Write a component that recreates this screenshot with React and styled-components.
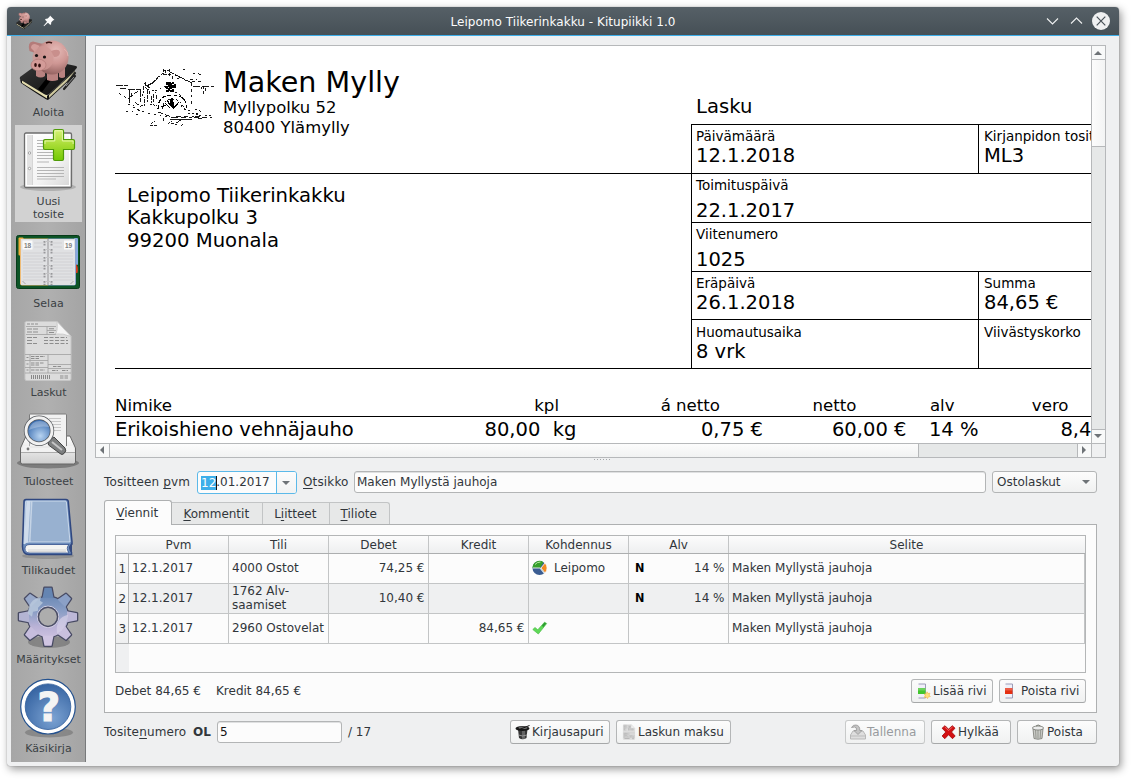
import React from "react";
import styled, { createGlobalStyle, css } from "styled-components";

const Global = createGlobalStyle`
  html, body { margin: 0; padding: 0; background: #fff; }
  body { font-family: "DejaVu Sans", sans-serif; font-size: 12px; color: #31363b; overflow: hidden; }
  *, *::before, *::after { box-sizing: border-box; }
  svg { display: block; flex: none; }
`;

const Desktop = styled.div`
  width: 1132px;
  height: 779px;
  padding: 7px 13px 12px 7px;
  background: #fff;
`;

const Window = styled.div`
  width: 1112px;
  height: 759px;
  display: flex;
  flex-direction: column;
  background: #eff0f1;
  border-radius: 4px 4px 3px 3px;
  box-shadow: 0 0 1px rgba(0, 0, 0, 0.5), 2px 3px 8px rgba(0, 0, 0, 0.42);
`;

const TitleBar = styled.header`
  height: 29px;
  flex: none;
  display: grid;
  grid-template-columns: 100px 1fr 100px;
  align-items: center;
  background: linear-gradient(#566067, #465056);
  border-bottom: 1px solid #3daee9;
  border-radius: 4px 4px 0 0;
  color: #fcfcfc;
`;

const TitleIcons = styled.div`
  display: flex;
  align-items: center;
  gap: 10px;
  padding-left: 8px;
`;

const Title = styled.div`
  text-align: center;
  line-height: 26px;
  padding-top: 2px;
  letter-spacing: 0.04px;
`;

const WindowControls = styled.div`
  display: flex;
  justify-content: flex-end;
  align-items: center;
  gap: 8px;
  padding-right: 9px;
`;

const Body = styled.div`
  flex: 1;
  min-height: 0;
  display: flex;
  padding: 0 0 4px 4px;
`;

const Sidebar = styled.nav`
  width: 75px;
  flex: none;
  display: flex;
  flex-direction: column;
  align-items: center;
  gap: 4px;
  background: linear-gradient(90deg, #a6a6a6, #b0b0b0 50%, #a4a4a4);
  border-right: 1px solid #77797b;
`;

const SideItem = styled.div`
  width: 67px;
  padding-top: 3px;
  height: ${(p) => (p.$tall ? 97 : 85)}px;
  margin-bottom: ${(p) => (p.$tall ? 1 : 0)}px;
  display: flex;
  flex-direction: column;
  align-items: center;
  background: ${(p) => (p.$active ? "#d2d2d2" : "transparent")};
`;

const SideLabel = styled.div`
  margin-top: 2px;
  padding: 1px 0 0 1px;
  font-size: 11px;
  line-height: 13px;
  text-align: center;
  white-space: pre;
  color: #3a3f44;
`;

const Main = styled.main`
  flex: 1;
  min-width: 0;
  padding: 9px 0 0 9px;
`;

/* ---------- document viewer ---------- */

const Viewer = styled.section`
  width: 1011px;
  height: 413px;
  display: grid;
  grid-template-columns: 995px 14px;
  grid-template-rows: 397px 14px;
  border: 1px solid #b6b8ba;
`;

const Page = styled.div`
  background: #fff;
  color: #000;
  overflow: hidden;
  padding-left: 19px;
  white-space: pre;
`;

const PageTop = styled.div`
  display: flex;
  height: 323px;
`;

const PageLeft = styled.div`
  width: 576px;
  flex: none;
`;

const LetterHead = styled.div`
  height: 128px;
  border-bottom: 1px solid #000;
  display: flex;
  gap: 9px;
  padding-top: 20px;
`;

const Sender = styled.div`
  font-size: 16.45px;
  line-height: 20px;
`;

const SenderName = styled.div`
  font-size: 28.6px;
  line-height: 32px;
  margin-bottom: 0;
`;

const Recipient = styled.div`
  height: 195px;
  border-bottom: 1px solid #000;
  padding: 11px 0 0 12px;
  font-size: 19.65px;
  line-height: 22.4px;
`;

const PageRight = styled.div`
  width: 420px;
  flex: none;
`;

const DocType = styled.div`
  height: 78px;
  padding: 49px 0 0 5px;
  font-size: 19.6px;
  line-height: 24px;
`;

const InfoGrid = styled.div`
  border-left: 1px solid #000;
  border-bottom: 1px solid #000;
`;

const InfoRow = styled.div`
  display: flex;
  height: ${(p) => p.$h || 49}px;
  border-top: 1px solid #000;
`;

const InfoCell = styled.div`
  width: ${(p) => (p.$wide ? "400px" : "286px")};
  flex: none;
  padding: ${(p) => (p.$low ? 2 : 1)}px 0 0 4px;
  & + & { border-left: 1px solid #000; width: 140px; padding-left: 5px; }
`;

const InfoLabel = styled.div`
  font-size: 13.5px;
  line-height: 20px;
`;

const InfoValue = styled.div`
  font-size: 19.5px;
  line-height: 22px;
  margin-top: ${(p) => (p.$spaced ? 5 : -1)}px;
`;

const ItemHead = styled.div`
  display: flex;
  margin-top: 24px;
  height: 24px;
  border-bottom: 1px solid #000;
  font-size: 16.6px;
  line-height: 25px;
`;

const ItemRow = styled.div`
  display: flex;
  font-size: 19.55px;
  line-height: 25px;
`;

const ItemCell = styled.div`
  width: ${(p) => p.$w}px;
  flex: none;
  text-align: ${(p) => (p.$left ? "left" : "right")};
`;

const VScroll = styled.div`
  display: flex;
  flex-direction: column;
  border-left: 1px solid #b6b8ba;
  background: #e6e8e8;
`;

const HScroll = styled.div`
  display: flex;
  border-top: 1px solid #b6b8ba;
  background: #e6e8e8;
`;

const ScrollCorner = styled.div`
  border-left: 1px solid #b6b8ba;
  border-top: 1px solid #b6b8ba;
`;

const edge = "1px solid #b6b8ba";

const ScrollButton = styled.div`
  width: ${(p) => p.$w}px;
  height: ${(p) => p.$h}px;
  flex: none;
  display: flex;
  align-items: center;
  justify-content: center;
  padding: ${(p) => p.$nudge || 0};
  background: #f8f9f9;
  border-style: solid;
  border-color: #b6b8ba;
  border-width: ${(p) => p.$edges};
`;

const VThumb = styled.div`
  height: 87px;
  background: linear-gradient(90deg, #fcfcfc, #f3f4f4);
  border-bottom: ${edge};
`;

const HThumb = styled.div`
  width: 809px;
  background: linear-gradient(#fcfcfc, #f1f2f2);
  border-right: ${edge};
`;

const ScrollGap = styled.div`
  flex: 1;
`;

const Splitter = styled.div`
  width: 1011px;
  height: 13px;
  padding: 1px 0 0 2px;
  display: flex;
  justify-content: center;
  gap: 2px;
`;

const SplitDot = styled.i`
  width: 1px;
  height: 1px;
  background: #a4a7a9;
`;

/* ---------- form ---------- */

const Form = styled.div`
  width: 993px;
  margin-left: 9px;
`;

const FieldRow = styled.div`
  display: flex;
  height: 23px;
  line-height: 23px;
  white-space: pre;
`;

const FieldLabel = styled.label`
  width: ${(p) => p.$w}px;
  flex: none;
  padding-left: ${(p) => p.$pad || 0}px;
  letter-spacing: 0.14px;
`;

const Key = styled.span`
  text-decoration: underline;
  text-underline-offset: 2px;
  text-decoration-thickness: 1px;
  text-decoration-skip-ink: none;
`;

const inputLook = css`
  background: #fcfcfc;
  border: 1px solid #b3b5b6;
  border-radius: 3px;
`;

const DateField = styled.div`
  ${inputLook}
  border-color: #5bb9e9;
  width: 100px;
  height: 23px;
  display: flex;
  line-height: 21px;
  padding-left: 3px;
  overflow: hidden;
`;

const Selected = styled.span`
  background: #3daee9;
  color: #fcfcfc;
  height: 14px;
  line-height: 14px;
  margin-top: 4px;
  box-shadow: 1px 0 0 #111;
`;

const DateDrop = styled.div`
  width: 20px;
  margin-left: auto;
  padding-right: 2px;
  border-left: 1px solid #5bb9e9;
  background: linear-gradient(#fcfcfc, #f1f2f2);
  display: flex;
  align-items: center;
  justify-content: center;
`;

const TextField = styled.div`
  ${inputLook}
  width: ${(p) => p.$w}px;
  height: 22px;
  padding-left: 2px;
  line-height: 20px;
  box-shadow: inset 0 1px 0 #dfe0e1;
`;

const Combo = styled.div`
  ${inputLook}
  background: linear-gradient(#fcfcfc, #f0f1f1);
  width: 105px;
  height: 22px;
  margin-left: 6px;
  padding: 0 6px 0 4px;
  line-height: 20px;
  display: flex;
  align-items: center;
  justify-content: space-between;
`;

const TabBar = styled.div`
  display: flex;
  align-items: flex-end;
  height: 24px;
  margin-top: 6px;
`;

const Tab = styled.div`
  width: ${(p) => p.$w}px;
  height: ${(p) => (p.$active ? 25 : 22)}px;
  line-height: ${(p) => (p.$active ? 24 : 22)}px;
  margin-bottom: ${(p) => (p.$active ? -1 : 0)}px;
  padding-right: 1.5px;
  text-align: center;
  border: 1px solid ${(p) => (p.$active ? "#aeb0b1" : "#c2c4c5")};
  border-left-width: ${(p) => (p.$active ? 1 : 0)}px;
  border-bottom: 0;
  border-radius: ${(p) => (p.$active ? "3px 3px 0 0" : p.$last ? "0 3px 0 0" : "0")};
  background: ${(p) => (p.$active ? "#fcfcfc" : "#e7e8e8")};
  position: relative;
`;

const Panel = styled.div`
  height: 189px;
  border: 1px solid #aeb0b1;
  background: #fcfcfc;
  padding: 10px 10px 0;
`;

const Grid = styled.div`
  width: 971px;
  height: 138px;
  border: 1px solid #b4b6b7;
  display: flex;
  flex-direction: column;
`;

const GridHead = styled.div`
  height: 18px;
  flex: none;
  display: flex;
  padding-left: 13px;
  background: linear-gradient(#fcfcfc, #eeeff0);
  border-bottom: 1px solid #acaeaf;
  line-height: 18px;
  text-align: center;
`;

const HeadCell = styled.div`
  width: ${(p) => p.$w}px;
  flex: none;
  border-right: 1px solid ${(p) => (p.$last ? "transparent" : "#c3c5c6")};
`;

const GridRow = styled.div`
  display: flex;
  height: 30px;
  flex: none;
`;

const RowNumber = styled.div`
  width: 13px;
  flex: none;
  background: linear-gradient(#fcfcfc, #eeeff0);
  border-right: 1px solid #b4b6b7;
  border-bottom: 1px solid #b4b6b7;
  line-height: 31px;
  padding-left: 2.5px;
`;

const Cell = styled.div`
  width: ${(p) => p.$w}px;
  flex: none;
  display: flex;
  align-items: center;
  gap: 6px;
  justify-content: ${(p) => (p.$right ? "flex-end" : p.$split ? "space-between" : "flex-start")};
  padding: 0 ${(p) => (p.$right || p.$split ? 3.5 : 3)}px ${(p) => (p.$two ? 1 : 2)}px 3px;
  line-height: 14px;
  background: ${(p) => (p.$alt ? "#eff0f1" : "#fcfcfc")};
  border-right: 1px solid #c3c5c6;
  border-bottom: 1px solid #c3c5c6;
  white-space: pre;
`;

const VatCode = styled.b`
  color: #000;
  font-family: "DejaVu Sans Condensed", "DejaVu Sans", sans-serif;
  font-stretch: condensed;
  font-size: 12.5px;
  margin-left: 3px;
`;

const Series = styled.b`
  letter-spacing: 0;
`;

const GridRest = styled.div`
  flex: 1;
  width: 13px;
  background: #eff0f1;
`;

const PanelFooter = styled.div`
  display: flex;
  height: 24px;
  line-height: 24px;
  margin-top: 6px;
  white-space: pre;
`;

const Total = styled.div`
  width: 101px;
`;

const Spacer = styled.div`
  flex: 1;
`;

const Button = styled.button`
  width: ${(p) => p.$w}px;
  height: 24px;
  margin: 0 0 0 ${(p) => p.$gap ?? 6}px;
  padding: 0 0 1px ${(p) => p.$pad}px;
  display: flex;
  align-items: center;
  gap: ${(p) => p.$inner ?? 1}px;
  font: inherit;
  white-space: nowrap;
  color: ${(p) => (p.$off ? "#989b9e" : "#31363b")};
  background: linear-gradient(#fcfcfc, #f0f1f1);
  border: 1px solid ${(p) => (p.$off ? "#c8caca" : "#b4b6b7")};
  border-bottom-color: ${(p) => (p.$off ? "#c0c2c3" : "#a6a8a9")};
  border-radius: 3px;
`;

const BottomRow = styled.div`
  display: flex;
  height: 24px;
  margin-top: 7px;
  line-height: 24px;
  white-space: pre;
`;

const NumberField = styled(TextField)`
  margin: 1px 6px 0 0;
  line-height: 21px;
  color: #111;
`;

/* ---------- small drawings ---------- */

const points = {
  down: "0,0 8,0 4,4",
  up: "0,4 8,4 4,0",
  left: "4,0 4,8 0,4",
  right: "0,0 0,8 4,4",
};
const Arrow = ({ dir }) => {
  const flat = dir === "up" || dir === "down";
  return (
    <svg width={flat ? 8 : 4} height={flat ? 4 : 8}>
      <polygon points={points[dir]} fill="#6e7377" />
    </svg>
  );
};

const PigIcon = ({ size = 64 }) => (
  <svg width={size} height={size} viewBox="0 0 64 64">
    <defs>
      <radialGradient id="pig" cx=".62" cy=".3" r=".75">
        <stop offset="0" stopColor="#e6bbb8" />
        <stop offset=".5" stopColor="#cf9794" />
        <stop offset="1" stopColor="#8e5d5b" />
      </radialGradient>
      <linearGradient id="cover" x1="0" y1="0" x2="1" y2="1">
        <stop offset="0" stopColor="#3a3a3a" />
        <stop offset="1" stopColor="#0c0c0c" />
      </linearGradient>
    </defs>
    <path d="M4 40 L31 57 L59 31 L59 36 L32 61 Q30 61 5 44Z" fill="#111" />
    <path d="M6 41 L31 56 L31 59.500 L6 44Z" fill="#e3dcae" />
    <path d="M33 56 L59 32 L59 35 L33 59Z" fill="#cfc99f" />
    <path d="M4 38 L26 22 Q28 21 32 21 L60 27 Q62 28 60 30 L33 55 Q31 57 28 55 L5 41 Q3 40 4 38Z" fill="url(#cover)" />
    <path d="M22 50 L43 24 L47 25 L26 53Z" fill="#000" />
    <path d="M48 50 L59 37 M52 43 L59 34" stroke="#222" strokeWidth="2.200" strokeLinecap="round" />
    <path d="M50 47 L58 38" stroke="#aaa" strokeWidth=".8" />
    <path d="M20 27h9v10q-4 3-9 0z M31 30h11v11q-6 2-11 0z M43 28h6v10q-3 2-6 0z" fill="#b98280" />
    <path d="M13.500 12 Q11 3 17 2.500 L27 5 L22 15Z" fill="#b47b79" />
    <path d="M15 9 Q15 5 19 5 L24 7 L19 13Z" fill="#d39d9a" />
    <ellipse cx="36" cy="18.500" rx="16.500" ry="17" fill="url(#pig)" />
    <ellipse cx="27" cy="19" rx="10.500" ry="12" fill="#d09895" opacity=".8" />
    <ellipse cx="22.500" cy="26" rx="7.500" ry="5.800" fill="#d39b98" stroke="#b07573" strokeWidth=".6" />
    <ellipse cx="19.500" cy="26" rx="1.300" ry="2.100" fill="#2e0d0c" />
    <ellipse cx="23.500" cy="26.500" rx="1.300" ry="2.100" fill="#2e0d0c" />
    <circle cx="20.500" cy="16.500" r="1.600" fill="#141010" />
    <circle cx="28.500" cy="18" r="1.600" fill="#141010" />
    <path d="M35 12 Q43 9 44 13 Q44 18 38 18Z" fill="#c98f8c" />
    <path d="M30 4 Q33 2.500 36 4" fill="none" stroke="#3c1614" strokeWidth="1.600" />
    <path d="M48 10q4 2 4 7" fill="none" stroke="#e0b3b0" strokeWidth="1" />
  </svg>
);

const NewDocIcon = () => (
  <svg width="64" height="64" viewBox="0 0 64 64">
    <defs>
      <linearGradient id="sheet" x1="0" y1="0" x2="1" y2="1">
        <stop offset="0" stopColor="#fff" />
        <stop offset=".6" stopColor="#f4f4f4" />
        <stop offset="1" stopColor="#d5d5d5" />
      </linearGradient>
      <linearGradient id="plus" x1="0" y1="0" x2="0" y2="1">
        <stop offset="0" stopColor="#d6f277" />
        <stop offset=".5" stopColor="#a7dc34" />
        <stop offset="1" stopColor="#73c904" />
      </linearGradient>
    </defs>
    <ellipse cx="32" cy="59" rx="28" ry="4" fill="#888" opacity=".45" />
    <rect x="8.500" y="5" width="47" height="54.500" rx="1.500" fill="url(#sheet)" stroke="#6d6d6d" strokeWidth="1.300" />
    <rect x="10.500" y="7" width="43" height="50.500" fill="none" stroke="#fff" />
    <rect x="11" y="7" width="5.500" height="50" fill="#e3e3e3" />
    <path d="M16.500 7v50" stroke="#c5c5c5" strokeWidth=".6" />
    <path d="M21 12.500h10M21 15.500h26M21 18.500h26M21 21.500h27M21 24.500h27M21 27.500h27M21 30.500h27M21 34h12M21 39.500h27M21 42.500h27M21 45.500h27M21 48.500h27M21 51h19" stroke="#b5b5b5" strokeWidth="1.100" />
    <circle cx="13.500" cy="25" r="1.200" fill="#fff" stroke="#777" strokeWidth=".6" />
    <circle cx="13.500" cy="40.500" r="1.200" fill="#fff" stroke="#777" strokeWidth=".6" />
    <path d="M39 1.500h7q1.500 0 1.500 1.500v8.500H57q1.500 0 1.500 1.500v7q0 1.500-1.500 1.500H47.500V31q0 1.500-1.500 1.500h-7q-1.500 0-1.500-1.500v-9.500H29q-1.500 0-1.500-1.500v-7q0-1.500 1.500-1.500h8.500V3q0-1.500 1.500-1.500z" fill="url(#plus)" stroke="#509b08" strokeWidth="1.200" />
    <path d="M38.800 13V2.800h7.600V13h10.700v3M38.800 13H29v3" fill="none" stroke="#eefabb" strokeWidth="1" opacity=".8" />
  </svg>
);

const DiaryIcon = () => (
  <svg width="64" height="64" viewBox="0 0 64 64">
    <rect x="0.500" y="5.500" width="63" height="53" rx="2" fill="#0c5426" stroke="#073a19" />
    <rect x="2.500" y="7.500" width="5" height="18" rx="1" fill="#f0ad3a" />
    <rect x="58" y="8" width="4" height="27" rx="1" fill="#86a9df" />
    <path d="M59 33q4 3 2.500 10H59z" fill="#da3b1d" />
    <path d="M4 8.500h28v47H6q-2 0-2-2z" fill="#eebc78" />
    <path d="M32 8.500h28v45q0 2-2 2H32z" fill="#8ea6cf" />
    <rect x="5" y="9" width="27" height="46" fill="#e0e1e3" />
    <rect x="32" y="9" width="27" height="46" fill="#e0e1e3" />
    <path d="M7 23h20M7 26h20M7 29h20M7 32h20M7 35h20M7 38h20M7 41h20M7 44h20M7 47h20M7 50h20M37 23h20M37 26h20M37 29h20M37 32h20M37 35h20M37 38h20M37 41h20M37 44h20M37 47h20M37 50h20M18 13h9M18 17h9M37 13h9M37 17h9" stroke="#cfd0d3" strokeWidth=".9" />
    <rect x="6.500" y="10.500" width="10" height="9" fill="#fafafa" />
    <rect x="48" y="10.500" width="10" height="9" fill="#fafafa" />
    <text x="8" y="18" fontSize="6.500" fontWeight="bold" fontFamily="Liberation Sans, sans-serif" fill="#808080">18</text>
    <text x="49" y="18" fontSize="6.500" fontWeight="bold" fontFamily="Liberation Sans, sans-serif" fill="#808080">19</text>
    <path d="M32 9v46" stroke="#b2b2b4" strokeWidth="1.600" />
    <path d="M28.500 11v44M35.500 11v44" stroke="#97989b" strokeWidth="2" strokeDasharray="1.800 1 1.800 3.400" />
    <path d="M29 11.500h6M29 19.500h6M29 27.500h6M29 35.500h6M29 43.500h6M29 51.500h6" stroke="#c4c4c6" />
    <path d="M6.500 51l3 3M57.500 51l-3 3" stroke="#999" strokeWidth=".8" />
  </svg>
);

const InvoiceIcon = ({ size = 64 }) => (
  <svg width={size} height={size} viewBox="0 0 64 64">
    <path d="M10 2.500h31l14 15V60q0 1.500-1.500 1.500h-43Q9 61.500 9 60V3.500z" fill="#dcdcdc" stroke="#c6c6c6" />
    <g stroke="#a0a0a0" strokeWidth=".8" fill="none">
      <path d="M10 7.500h30M31 7.500v8M10 15.500h30M31 11.500h9M9 35.500h46M9 41.500h23M9 48.500h23M9 54h46M14 35.500v18.500M32 35.500v18.500M32 45.500h23M32 49.500h23" />
    </g>
    <g stroke="#8d8d8d" strokeWidth="1.100" fill="none">
      <path d="M11 5h12" strokeDasharray="3 1" />
      <path d="M11 10h11M11 13h11M33 9.700h6M33 13.500h6M11 18.500h10M11 21.500h6M11 24.500h10" strokeDasharray="5 1" />
      <path d="M28 18.500h23M28 21.500h24M28 24.500h24" strokeDasharray="4 1.500" />
      <path d="M15 37.500h14M15 39.500h8M15 44h13M15 46h9M15 51h14M37 47.500h8M36 51.500h6M46 51.500h6M10.500 38.500h2M10.500 45h2M10.500 51h2M44 57h9M44 59h9" strokeDasharray="3.500 1" />
    </g>
    <path d="M15 58h19" stroke="#888" strokeWidth="4" strokeDasharray="1 1" />
    <path d="M41 2.500q1 11-2 12.500 8-1 16 2.500z" fill="#f4f4f4" stroke="#c2c2c2" strokeWidth=".7" />
  </svg>
);

const PrinterIcon = () => (
  <svg width="64" height="64" viewBox="0 0 64 64">
    <defs>
      <radialGradient id="lens" cx=".55" cy=".7" r=".6">
        <stop offset="0" stopColor="#b8d4f1" />
        <stop offset="1" stopColor="#3a6db0" />
      </radialGradient>
      <linearGradient id="tray" x1="0" y1="0" x2="0" y2="1">
        <stop offset="0" stopColor="#fff" />
        <stop offset="1" stopColor="#cfcfcf" />
      </linearGradient>
    </defs>
    <ellipse cx="32" cy="55" rx="31" ry="5.500" fill="#555" opacity=".55" />
    <path d="M10 28h44l5.500 12v14q0 2-2 2h-51q-2 0-2-2V40z" fill="url(#tray)" stroke="#666" />
    <rect x="13.500" y="6" width="37" height="33" rx="1" fill="#f2f2f2" stroke="#7b7b7b" />
    <path d="M33 10.500h12M33 13.500h12M33 16.500h12M35 19.500h10M36 22.500h9" stroke="#c8c8c8" strokeWidth="1.200" />
    <path d="M7.500 38h6v-6h36.500v6H57l2 6H5z" fill="#f3f3f3" opacity=".85" />
    <path d="M5 44.500h54" stroke="#9d9d9d" strokeWidth=".8" />
    <circle cx="12" cy="41" r="1.400" fill="#777" />
    <path d="M32 33l6-4 11 11q2 3-1 5.500-2 2-4 0L32.500 37z" fill="#7d7f80" stroke="#444" />
    <path d="M36 34l10 8" stroke="#c5c5c5" strokeWidth="2" />
    <circle cx="23" cy="22.700" r="13" fill="url(#lens)" stroke="#55585c" strokeWidth="4.400" />
    <circle cx="23" cy="22.700" r="13" fill="none" stroke="#f1f1f1" strokeWidth="2.900" />
    <path d="M13 22q2-9 11-9 7 0 9 6-9-2-20 3z" fill="#fff" opacity=".28" />
  </svg>
);

const BookIcon = () => (
  <svg width="64" height="64" viewBox="0 0 64 64">
    <ellipse cx="32" cy="59" rx="26" ry="3" fill="#555" opacity=".3" />
    <path d="M10 2.500h40q2 0 2.300 2L56 45v2h-.5q-2 4 0 8.500v2H13q-6.500 0-6.500-8L8 4.500q0-2 2-2z" fill="#6d8dbb" stroke="#2f4780" strokeWidth="1.500" />
    <path d="M10.500 4h38.700q1 0 1.200 1L54 45H13q-3 0-5 2L9.500 5q0-1 1-1z" fill="#98b1d0" stroke="#dbe6f3" strokeWidth=".8" />
    <path d="M10.500 4h4L12 45l-4 2z" fill="#cfdcec" />
    <path d="M15 4h1.500l-2 41H13z" fill="#c5d4e6" />
    <path d="M14 47.500h39q-3.500 3.500 0 8.500H14q-5 0-5-4.300 0-4.200 5-4.200z" fill="#f4f4f2" stroke="#33518d" strokeWidth=".8" />
    <path d="M12 53h38M12 54.500h38" stroke="#cfcfcf" strokeWidth=".8" />
    <path d="M56 46q-6 5 0 10" fill="#33497f" />
  </svg>
);

const angles = [0, 45, 90, 135, 180, 225, 270, 315];
const toothFill = ["#6585b2", "#8ba0c6", "#bdb8d8", "#c9c0de", "#d0c5e2", "#c6bddd", "#b3b4d3", "#98a9ca"];
const GearIcon = () => (
  <svg width="64" height="64" viewBox="0 0 64 64">
    <defs>
      <linearGradient id="gear" gradientUnits="userSpaceOnUse" x1="0" y1="-24" x2="0" y2="24">
        <stop offset="0" stopColor="#6585b2" />
        <stop offset=".4" stopColor="#8c9fc6" />
        <stop offset=".7" stopColor="#b9b2d6" />
        <stop offset="1" stopColor="#d2c5e2" />
      </linearGradient>
    </defs>
    <ellipse cx="33" cy="56" rx="21" ry="6" fill="#555" opacity=".45" />
    <g transform="translate(32 30.800)">
      <g stroke="#474a63" strokeWidth="2.600" strokeLinejoin="round">
        {angles.map((a) => <path key={a} d="M-5.500-18L-3.500-29H3.500L5.500-18Z" transform={`rotate(${a})`} />)}
        <circle r="20" />
      </g>
      <circle r="20.200" fill="url(#gear)" />
      {angles.map((a, i) => <path key={a} d="M-5.500-19L-3.500-29H3.500L5.500-19Z" transform={`rotate(${a})`} fill={toothFill[i]} />)}
      <path d="M-20-3q0-14 13-17l-1 4 3 2-5 5 0 3-5 1-1 5z" fill="#bccbdd" opacity=".8" />
      <path d="M9 17q-2-16 11-19-1 14-11 19z" fill="#d7d2e8" opacity=".7" />
      <circle r="10.700" fill="none" stroke="#d8d4e6" strokeWidth="1" />
      <circle r="9.600" fill="#adadad" stroke="#4b4e66" strokeWidth="1.500" />
    </g>
  </svg>
);

const HelpIcon = () => (
  <svg width="64" height="64" viewBox="0 0 64 64">
    <defs>
      <radialGradient id="help" cx=".6" cy=".75" r=".75">
        <stop offset="0" stopColor="#7ba2d2" />
        <stop offset="1" stopColor="#3765a3" />
      </radialGradient>
    </defs>
    <ellipse cx="33" cy="57.500" rx="24" ry="5" fill="#555" opacity=".4" />
    <circle cx="32" cy="31.700" r="27.300" fill="#fff" stroke="#23518f" strokeWidth="1.200" />
    <circle cx="32" cy="31.700" r="22.800" fill="url(#help)" stroke="#2f5c99" strokeWidth=".8" />
    <text x="32.700" y="46" textAnchor="middle" fontSize="39" fontWeight="bold" fontFamily="DejaVu Sans, sans-serif" fill="#f4f4f4" stroke="#f4f4f4" strokeWidth="1.200">?</text>
  </svg>
);

const PinIcon = () => (
  <svg width="12" height="12" viewBox="0 0 12 12">
    <path d="M7 .5L11.500 5 10.200 5.300 8.300 7.200 8 9.700 6.800 9.500 5 7.700 1 11.200.6 10.800 4 6.800 2.300 5.100 2.200 4 4.700 3.600 6.700 1.600Z" fill="#fcfcfc" />
  </svg>
);

const Chevron = ({ up }) => (
  <svg width="16" height="18" viewBox="0 0 16 18">
    <path d={up ? "M3 11.500L8.500 6l5.500 5.500" : "M3 6.500L8.500 12l5.500-5.500"} fill="none" stroke="#eff0f1" strokeWidth="1.100" />
  </svg>
);

const CloseIcon = () => (
  <svg width="18" height="18" viewBox="0 0 18 18">
    <circle cx="9" cy="9" r="9" fill="#eff0f1" />
    <path d="M4.700 4.700l8.600 8.600M13.300 4.700l-8.600 8.600" stroke="#475057" strokeWidth="1.200" />
  </svg>
);

const MillLogo = () => (
  <svg width="99" height="64" viewBox="0 0 99 64" fill="none" stroke="#000" strokeWidth=".9" shapeRendering="crispEdges">
    <path d="M32 21L48 7M35 19L44 11M55 6L77 17" strokeDasharray="5 1" />
    <path d="M60 9L72 15" strokeDasharray="2 3" />
    <path d="M48 3v6M50 4v3M54 3v7M48 4h6M49 8h7M57 10v3" strokeDasharray="3 1" />
    <path d="M1 19h12M5 22h6M13 23h13M14 24v13M16 27v3M25 24v12M13 33l10-8" strokeDasharray="7 1" />
    <path d="M28 20v7M30 16v6M33 18v4M32 24v12M34 25v3M36 30v7M38 28v8M29 33v6M31 22l4 3M41 29v4" strokeDasharray="4 1" />
    <path d="M29 17l6 5M27 28l3 5M37 24l5 3M20 36l6 5M26 39h4M35 38l7 2" strokeDasharray="2 1" />
    <path d="M52 16v8M54 18v7M56 17v6M58 19v7M60 18v4M50 21h12M51 25h6M53 17h6" strokeDasharray="3 1" strokeWidth="1.200" />
    <path d="M40 25q8-5 13-4M60 26q6 2 9 8" strokeDasharray="2 3" />
    <path d="M43 43q0-14 14-14t15 13" strokeDasharray="4 2" strokeWidth="1.100" />
    <path d="M47 43q1-10 10-10 9 0 10 9" strokeDasharray="2 2" />
    <path d="M57 32v9M58 36v6M50 37l5 5M64 36l-6 7M52 34l3 5M46 41l5-2M56 33v7" strokeWidth="1.100" />
    <path d="M76 17v14M76 35v6M75 13h7M77 15h10M88 20v4M90 22v5M88 25v4M86 21v2" strokeDasharray="3 3" />
    <path d="M78 20h22" strokeDasharray="7 2" />
    <path d="M68 3l3 1M78 7h6M84 8l5 2M62 12l4 2" strokeDasharray="2 3" />
    <path d="M4 27l10 7 6 8 12 5 14 3 12 2M13 38l14 8M11 45h7M21 48h4" strokeDasharray="2 4" />
    <path d="M43 46l8 3 8 3 18-1 6-3M61 50h12M79 51h18M80 50h8M83 53l4-1" strokeDasharray="5 3" />
    <path d="M55 53h22" />
    <path d="M69 43l7 2M80 43l7 3M73 47h9M90 49h8M67 39l4 6M81 47l5 3" strokeDasharray="2 2" />
    <path d="M35 59h8M36 58l4-3M53 58l4-3M61 57l5-3M66 60l2-2M48 52v3M56 57l6 2" strokeDasharray="3 1" />
  </svg>
);

const PieIcon = () => (
  <svg width="16" height="16" viewBox="0 0 16 16">
    <circle cx="7.500" cy="8" r="7" fill="#3a5c91" />
    <path d="M8 8L.5 8A7 7 0 0 1 11.500 2.200z" fill="#35a02b" />
    <path d="M9 8l4-5a7 7 0 0 1 0 10z" fill="#f28a22" stroke="#fff" strokeWidth=".8" />
    <path d="M.8 8H8l4 5" fill="none" stroke="#dfe8e8" strokeWidth="1.100" />
    <path d="M3 4.500Q5 2 8.500 2" stroke="#b8e7a5" fill="none" />
  </svg>
);

const CheckIcon = () => (
  <svg width="16" height="16" viewBox="0 0 16 16">
    <path d="M.8 9.500L3 7.500 5.800 9.800 12.500 2.200l2.200 1.300L6.300 14z" fill="#5fd957" stroke="#4fbf4a" strokeWidth=".7" />
    <path d="M10 5.500L12.500 2.600l1.700 1-3 3.700z" fill="#2d9c33" />
  </svg>
);

const RowIcon = ({ add }) => (
  <svg width="16" height="16" viewBox="0 0 16 16">
    <path d="M2.500 1h7v14h-7" fill="#f0f0f8" stroke="#9c9cb8" />
    <rect x="2" y="5" width="7.500" height="6" fill={add ? "#42c62e" : "#e52f12"} />
    <path d="M2 5h7.500v2.500H2z" fill="#fff" opacity=".22" />
    {add && <path d="M11 8.800l.9 1.700 2-.3-.8 1.900 1.200 1.500-2 .3-.8 1.700-1.200-1.500-2 .3.900-1.900-.9-1.500 2-.2z" fill="#ffdf7f" stroke="#f0b53c" strokeWidth=".6" />}
  </svg>
);

const HatIcon = () => (
  <svg width="16" height="16" viewBox="0 0 16 16">
    <path d="M3 5h9.500l-1 9q-4 2.500-7.500 0z" fill="#373737" />
    <path d="M7 6h3v9H7z" fill="#777" opacity=".7" />
    <ellipse cx="7.500" cy="4.500" rx="7" ry="2.600" fill="#181818" />
    <ellipse cx="8" cy="3.800" rx="4.500" ry="1.200" fill="#6b6b6b" />
    <path d="M3 6L14.500 1.500" stroke="#111" />
    <path d="M3.500 11q4 2 8.500 0" stroke="#aaa" fill="none" strokeWidth=".8" />
  </svg>
);

const SaveIcon = () => (
  <svg width="16" height="16" viewBox="0 0 16 16">
    <path d="M3 7h10l2.500 4v4H.5v-4z" fill="#dedede" stroke="#b8b8b8" />
    <path d="M1 12h14" stroke="#bbb" />
    <path d="M1.500 3.500Q3 .5 6 1q4 .5 3.800 5.500H12L8 10.500 4 6.500h2.500Q7 3 4.500 3z" fill="#c4c4c4" stroke="#969696" strokeWidth=".8" />
  </svg>
);

const CrossIcon = () => (
  <svg width="16" height="16" viewBox="0 0 16 16">
    <path d="M4 1.700L7.500 5.200 11.300 1.700 14 4.200 10.500 8l3.700 4-2.700 2.700-4-4-3.700 4-2.700-2.700 3.700-4-3.700-3.800z" fill="#d40f12" stroke="#a20508" strokeWidth=".8" strokeLinejoin="round" />
    <path d="M3.800 3L7.500 6.500 11.500 3" fill="none" stroke="#f47a73" strokeWidth=".8" />
  </svg>
);

const TrashIcon = () => (
  <svg width="16" height="16" viewBox="0 0 16 16">
    <path d="M3 5h10l-1 9.500q-4 1.500-8 0z" fill="#c9cac6" stroke="#777972" strokeWidth=".8" />
    <path d="M5.500 6l.5 8M8 6v8.500M10.700 6l-.5 8" stroke="#92948d" strokeWidth=".9" />
    <ellipse cx="8" cy="4" rx="5.600" ry="2" fill="#eceded" stroke="#777972" strokeWidth=".8" />
    <path d="M6 2q2-2 4.500 0" fill="none" stroke="#777972" />
  </svg>
);

/* ---------- content ---------- */

const sideItems = [
  ["Aloita", PigIcon],
  ["Uusi\ntosite", NewDocIcon, true],
  ["Selaa", DiaryIcon],
  ["Laskut", InvoiceIcon],
  ["Tulosteet", PrinterIcon],
  ["Tilikaudet", BookIcon],
  ["Määritykset", GearIcon],
  ["Käsikirja", HelpIcon],
];

const rows = [
  { tili: "4000 Ostot", debet: "74,25 €", kredit: "", mark: "pie", alv: "14 %" },
  { tili: "1762 Alv-\nsaamiset", debet: "10,40 €", kredit: "", mark: "", alv: "14 %" },
  { tili: "2960 Ostovelat", debet: "", kredit: "84,65 €", mark: "check", alv: "" },
];

const Info = ({ label, value, wide, low }) => (
  <InfoCell $wide={wide} $low={low}>
    <InfoLabel>{label}</InfoLabel>
    <InfoValue $spaced={wide}>{value}</InfoValue>
  </InfoCell>
);

function Invoice() {
  return (
    <Page>
      <PageTop>
        <PageLeft>
          <LetterHead>
            <MillLogo />
            <Sender>
              <SenderName>Maken Mylly</SenderName>
              Myllypolku 52{"\n"}80400 Ylämylly
            </Sender>
          </LetterHead>
          <Recipient>Leipomo Tiikerinkakku{"\n"}Kakkupolku 3{"\n"}99200 Muonala</Recipient>
        </PageLeft>
        <PageRight>
          <DocType>Lasku</DocType>
          <InfoGrid>
            <InfoRow>
              <Info label="Päivämäärä" value="12.1.2018" />
              <Info label="Kirjanpidon tosite" value="ML3" />
            </InfoRow>
            <InfoRow><Info wide label="Toimituspäivä" value="22.1.2017" /></InfoRow>
            <InfoRow><Info wide label="Viitenumero" value="1025" /></InfoRow>
            <InfoRow $h={48}>
              <Info label="Eräpäivä" value="26.1.2018" />
              <Info label="Summa" value="84,65 €" />
            </InfoRow>
            <InfoRow>
              <Info low label="Huomautusaika" value="8 vrk" />
              <Info low label="Viivästyskorko" value="" />
            </InfoRow>
          </InfoGrid>
        </PageRight>
      </PageTop>
      <ItemHead>
        <ItemCell $w={300} $left>Nimike</ItemCell>
        <ItemCell $w={144}>kpl</ItemCell>
        <ItemCell $w={161}>á netto</ItemCell>
        <ItemCell $w={136.5}>netto</ItemCell>
        <ItemCell $w={98}>alv</ItemCell>
        <ItemCell $w={114}>vero</ItemCell>
      </ItemHead>
      <ItemRow>
        <ItemCell $w={300} $left>Erikoishieno vehnäjauho</ItemCell>
        <ItemCell $w={161.5}>80,00  kg</ItemCell>
        <ItemCell $w={186.5}>0,75 €</ItemCell>
        <ItemCell $w={143.5}>60,00 €</ItemCell>
        <ItemCell $w={72}>14 %</ItemCell>
        <ItemCell $w={144}>8,40 €</ItemCell>
      </ItemRow>
    </Page>
  );
}

function Entries() {
  return (
    <Grid>
      <GridHead>
        {["Pvm", "Tili", "Debet", "Kredit", "Kohdennus", "Alv", "Selite"].map((h, i) => (
          <HeadCell key={h} $w={i === 6 ? 356 : 100} $last={i === 6}>{h}</HeadCell>
        ))}
      </GridHead>
      {rows.map((r, i) => {
        const alt = i === 1;
        return (
          <GridRow key={i}>
            <RowNumber>{i + 1}</RowNumber>
            <Cell $w={100} $alt={alt}>12.1.2017</Cell>
            <Cell $w={100} $alt={alt} $two={alt}>{r.tili}</Cell>
            <Cell $w={100} $alt={alt} $right>{r.debet}</Cell>
            <Cell $w={100} $alt={alt} $right>{r.kredit}</Cell>
            <Cell $w={100} $alt={alt}>
              {r.mark === "pie" && <><PieIcon />Leipomo</>}
              {r.mark === "check" && <CheckIcon />}
            </Cell>
            <Cell $w={100} $alt={alt} $split>
              {r.alv && <><VatCode>N</VatCode>{r.alv}</>}
            </Cell>
            <Cell $w={356} $alt={alt}>Maken Myllystä jauhoja</Cell>
          </GridRow>
        );
      })}
      <GridRest />
    </Grid>
  );
}

export default function App() {
  return (
    <>
      <Global />
      <Desktop>
        <Window>
          <TitleBar>
            <TitleIcons><PigIcon size={18} /><PinIcon /></TitleIcons>
            <Title>Leipomo Tiikerinkakku - Kitupiikki 1.0</Title>
            <WindowControls><Chevron /><Chevron up /><CloseIcon /></WindowControls>
          </TitleBar>
          <Body>
            <Sidebar>
              {sideItems.map(([label, Icon, active]) => (
                <SideItem key={label} $active={active} $tall={active}>
                  <Icon />
                  <SideLabel>{label}</SideLabel>
                </SideItem>
              ))}
            </Sidebar>
            <Main>
              <Viewer>
                <Invoice />
                <VScroll>
                  <ScrollButton $w={13} $h={14} $edges="0 0 1px" $nudge="0 1px 0 0"><Arrow dir="up" /></ScrollButton>
                  <VThumb />
                  <ScrollGap />
                  <ScrollButton $w={13} $h={14} $edges="1px 0 0" $nudge="0 1px 1px 0"><Arrow dir="down" /></ScrollButton>
                </VScroll>
                <HScroll>
                  <ScrollButton $w={14} $h={13} $edges="0 1px 0 0" $nudge="0 1px 1px 0"><Arrow dir="left" /></ScrollButton>
                  <HThumb />
                  <ScrollGap />
                  <ScrollButton $w={14} $h={13} $edges="0 0 0 1px" $nudge="0 2px 1px 0"><Arrow dir="right" /></ScrollButton>
                </HScroll>
                <ScrollCorner />
              </Viewer>
              <Splitter>{[0, 1, 2, 3, 4, 5].map((n) => <SplitDot key={n} />)}</Splitter>
              <Form>
                <FieldRow>
                  <FieldLabel $w={93}>Tositteen <Key>p</Key>vm</FieldLabel>
                  <DateField>
                    <Selected>12</Selected>.01.2017
                    <DateDrop><Arrow dir="down" /></DateDrop>
                  </DateField>
                  <FieldLabel $w={57} $pad={6}><Key>O</Key>tsikko</FieldLabel>
                  <TextField $w={632}>Maken Myllystä jauhoja</TextField>
                  <Combo>Ostolaskut<Arrow dir="down" /></Combo>
                </FieldRow>
                <TabBar>
                  <Tab $w={68} $active><Key>V</Key>iennit</Tab>
                  <Tab $w={91}><Key>K</Key>ommentit</Tab>
                  <Tab $w={67}>L<Key>i</Key>itteet</Tab>
                  <Tab $w={60} $last><Key>T</Key>iliote</Tab>
                </TabBar>
                <Panel>
                  <Entries />
                  <PanelFooter>
                    <Total>Debet 84,65 €</Total>
                    <Total>Kredit 84,65 €</Total>
                    <Spacer />
                    <Button $w={82} $pad={4}><RowIcon add />Lisää rivi</Button>
                    <Button $w={87} $pad={3} $inner={2}><RowIcon />Poista rivi</Button>
                  </PanelFooter>
                </Panel>
                <BottomRow>
                  <FieldLabel $w={89}>Tosite<Key>n</Key>umero</FieldLabel>
                  <FieldLabel $w={24}><Series>OL</Series></FieldLabel>
                  <NumberField $w={125}>5</NumberField>
                  / 17
                  <Spacer />
                  <Button $w={100} $pad={4}><HatIcon />Kirjausapuri</Button>
                  <Button $w={115} $pad={4}><InvoiceIcon size={16} />Laskun maksu</Button>
                  <Button $w={80} $pad={4} $gap={114} $off><SaveIcon />Tallenna</Button>
                  <Button $w={80} $pad={9}><CrossIcon />Hylkää</Button>
                  <Button $w={80} $pad={12}><TrashIcon />Poista</Button>
                </BottomRow>
              </Form>
            </Main>
          </Body>
        </Window>
      </Desktop>
    </>
  );
}
